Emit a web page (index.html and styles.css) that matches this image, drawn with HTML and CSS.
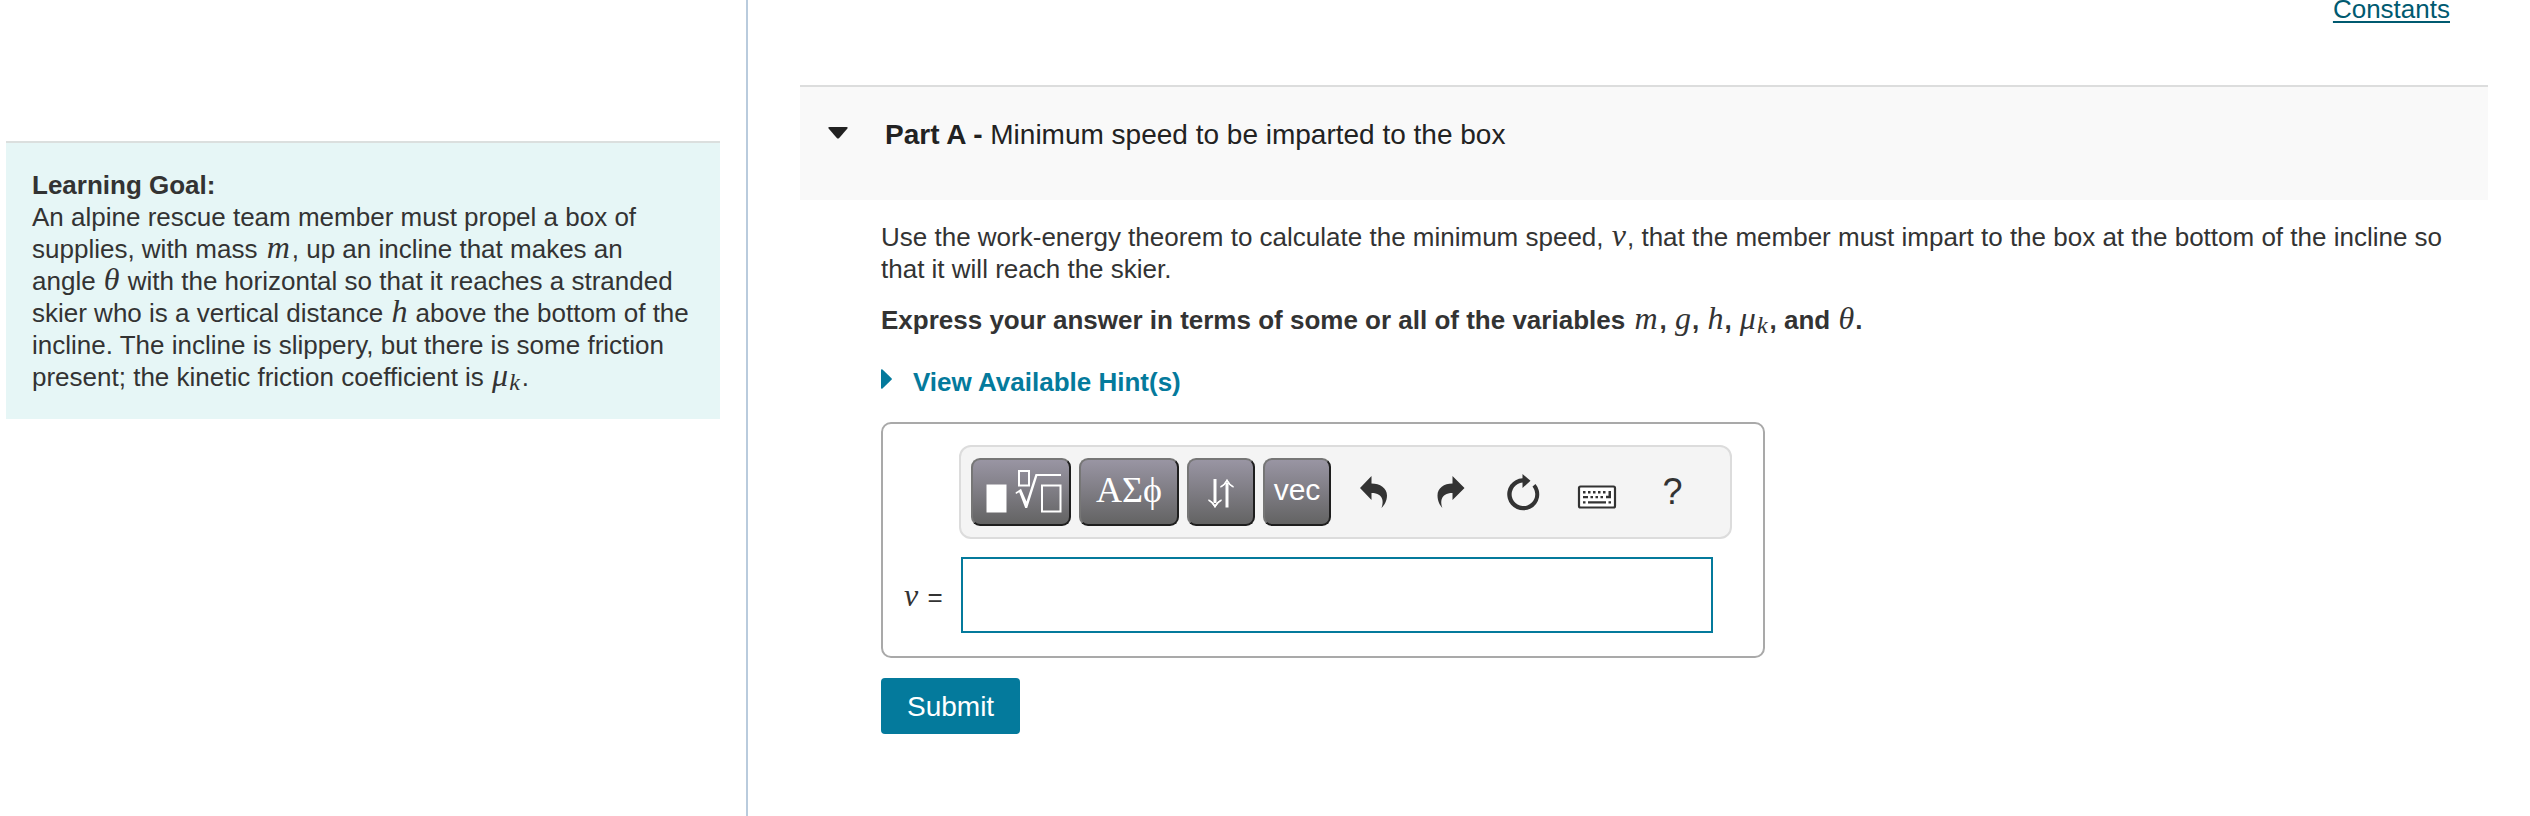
FILE: index.html
```html
<!DOCTYPE html>
<html lang="en">
<head>
<meta charset="utf-8">
<title>Part A - Minimum speed to be imparted to the box</title>
<link rel="stylesheet" href="styles.css">
</head>
<body>
<div class="page">
  <aside class="sidebar">
    <section class="goal">
      <strong>Learning Goal:</strong>
      <p>An alpine rescue team member must propel a box of supplies, with mass <i class="m wide">m</i>, up an incline that makes an angle <i class="m">θ</i> with the horizontal so that it reaches a stranded skier who is a vertical distance <i class="m">h</i> above the bottom of the incline. The incline is slippery, but there is some friction present; the kinetic friction coefficient is <i class="m">μ<sub>k</sub></i>.</p>
    </section>
  </aside>
  <main class="main">
    <nav class="links"><a href="#constants">Constants</a></nav>
    <header class="part">
      <svg class="caret" viewBox="0 0 20 12"><path d="M1.5 0H18.500Q20.500 0 19.200 1.800L11.200 11Q10 12.200 8.800 11L.8 1.800Q-.5 0 1.500 0Z"/></svg>
      <h1><b>Part A - </b>Minimum speed to be imparted to the box</h1>
    </header>
    <div class="body">
      <p>Use the work-energy theorem to calculate the minimum speed, <i class="m">v</i>, that the member must impart to the box at the bottom of the incline so that it will reach the skier.</p>
      <p class="instruct">Express your answer in terms of some or all of the variables <i class="m wide">m</i>, <i class="m">g</i>, <i class="m">h</i>, <i class="m">μ<sub>k</sub></i>, and <i class="m">θ</i>.</p>
      <a class="hints" href="#hints"><svg viewBox="0 0 11 20"><path d="M0 1.500Q0-.5 1.500.6L10.500 9.200Q11.300 10 10.500 10.800L1.500 19.500Q0 20.500 0 18.500Z"/></svg>View Available Hint(s)</a>
      <form class="answer" id="answer">
        <div class="toolbar">
          <button type="button" class="key big" aria-label="Templates"><svg viewBox="973 460 96 64"><path fill="#fff" d="M986.500 484.500h20v28h-20z"/><g fill="none" stroke="#fff" stroke-width="2"><path d="M1019 471h10v14.500h-10zM1042 485.500h18.500v26H1042z"/></g><path fill="#fff" d="M1015.500 492.500L1021 488.800L1026.500 501.500L1035.500 474H1061V476H1037.300L1027.200 508H1025.200L1019.200 492.300L1016 494Z"/></svg></button>
          <button type="button" class="key big greek">ΑΣϕ</button>
          <button type="button" class="key" aria-label="Arrows"><svg viewBox="1189 460 64 64"><g fill="#fff"><path d="M1213.500 479h3v24h-3z"/><path d="M1225.500 483h3v24.500h-3z"/><path d="M1208 499.500Q1213 501.500 1215 505Q1217 501.500 1222 499.500Q1217.500 503 1215 508Q1212.500 503 1208 499.500ZM1220 487.500Q1225 485.500 1227 482Q1229 485.500 1234 487.500Q1229.500 484 1227 479Q1224.500 484 1220 487.500Z"/></g><path fill="none" stroke="#fff" stroke-width="1.500" d="M1208.500 500q4 2 6.500 6.500q2.500-4.500 6.500-6.500M1220.500 487q4-2 6.500-6.500q2.500 4.500 6.500 6.500"/></svg></button>
          <button type="button" class="key vec">vec</button>
          <button type="button" class="tool" aria-label="Undo"><svg viewBox="1339 458 67 68"><path d="M1360 488L1371.500 476V483.500C1380 483.500 1387 488 1387 495.500C1387 501 1384 505.500 1381.500 508C1383.500 503 1384.300 493 1371.500 493V500Z"/></svg></button>
          <button type="button" class="tool" aria-label="Redo"><svg viewBox="1414 458 67 68"><path d="M1464.500 488L1452.500 476V483.500C1444 483.500 1437.500 488 1437.500 495.500C1437.500 501 1440 505.500 1442.500 508C1440.500 503 1439.700 493 1452.500 493V500Z"/></svg></button>
          <button type="button" class="tool" aria-label="Reset"><svg viewBox="1489 458 67 68"><path d="M1522.500 474L1530.500 480.800L1522.500 488V482.500A11.800 11.800 0 1 0 1534 489L1532.500 486.500L1535.500 484A16 16 0 1 1 1522.500 478.300Z"/></svg></button>
          <button type="button" class="tool" aria-label="Keyboard"><svg viewBox="1564 458 67 68"><rect x="1579" y="486.500" width="36" height="21" rx="1.500" fill="#fff" stroke="#333" stroke-width="2.200"/><path d="M1583 491h2.500v2.500h-2.500zM1588 491h2.500v2.500h-2.500zM1593 491h2.500v2.500h-2.500zM1598 491h2.500v2.500h-2.500zM1603 491h2.500v2.500h-2.500zM1608.500 491h2.500v7.200h-5v-2.400h2.500zM1583 496h5v2.200h-5zM1590.500 496h2.500v2.200h-2.500zM1595.500 496h2.500v2.200h-2.500zM1600.500 496h2.500v2.200h-2.500zM1583 501.200h2.500v2.200h-2.500zM1588 501.200h18v2.200h-18zM1608.500 501.200h2.500v2.200h-2.500z"/></svg></button>
          <button type="button" class="tool">?</button>
        </div>
        <label for="speed"><i class="m wide">v</i> =</label>
        <input id="speed" type="text">
      </form>
      <button type="submit" form="answer" class="submit">Submit</button>
    </div>
  </main>
</div>
</body>
</html>
```

FILE: styles.css
```css
* { box-sizing: border-box; }
body {
  margin: 0;
  background: #fff;
  color: #333;
  font: 26px/32px "Liberation Sans", Arial, sans-serif;
}
p, h1 { margin: 0; }
button, input { font-family: inherit; margin: 0; }
svg { display: block; flex: none; }

.page {
  display: grid;
  grid-template-columns: 748px minmax(0, 1fr);
  min-height: 100vh;
}
.sidebar {
  padding: 141px 26px 0 6px;
  border-right: 2px solid #b9cbdd;
}
.goal {
  padding: 26px 29px 26px 26px;
  border-top: 2px solid #dbdfde;
  background: #e6f6f6;
}

/* Mathematical variables */
.m {
  font: italic 32px/28px "Liberation Serif", "Times New Roman", serif;
  padding: 0 1px;
}
.m.wide { padding: 0 2px; }
.m sub {
  font-size: 24px;
  line-height: 16px;
  vertical-align: -4px;
  padding: 0 1px;
}

.main { padding: 0 42px 0 52px; }
.links {
  padding-right: 38px;
  text-align: right;
  line-height: 18px;
}
.links a {
  color: #005a70;
  text-decoration-thickness: 2px;
  text-underline-offset: 3px;
}
.part {
  display: flex;
  align-items: flex-start;
  gap: 37px;
  margin-top: 67px;
  padding: 32px 28px 49px;
  border-top: 2px solid #dcdddd;
  background: #f9f9f9;
  color: #222;
}
.part h1 { font-size: 28px; font-weight: 400; }
.caret { width: 20px; height: 12px; margin-top: 8px; fill: #222; }

.body { padding: 21px 32px 0 81px; }
.instruct { margin-top: 19px; font-weight: 700; }
.hints {
  display: flex;
  width: fit-content;
  gap: 21px;
  margin-top: 30px;
  color: #047a9c;
  font-weight: 700;
  text-decoration: none;
}
.hints svg { width: 11px; height: 20px; margin-top: 3px; fill: #047a9c; }

.answer {
  display: grid;
  grid-template-columns: 57px minmax(0, 1fr);
  row-gap: 18px;
  align-items: center;
  max-width: 884px;
  margin-top: 24px;
  padding: 21px 31px 23px 19px;
  border: 2px solid #a9a9a9;
  border-radius: 10px;
}
.toolbar {
  grid-column: 2;
  display: flex;
  gap: 8px;
  padding: 11px 10px;
  border: 2px solid #dcdcdc;
  border-radius: 12px;
  background: #f4f4f4;
}
.key, .tool {
  display: flex;
  align-items: center;
  justify-content: center;
  height: 68px;
  padding: 0;
}
.key {
  width: 68px;
  border: 2px solid;
  border-color: #767676 #1e1e1e #1e1e1e #767676;
  border-radius: 9px;
  background: linear-gradient(#9995a3, #636363);
  color: #fff;
}
.key svg { width: 64px; height: 64px; }
.key.big { width: 100px; }
.key.big svg { width: 96px; }
.greek { font: 36px/40px "Liberation Serif", serif; padding-bottom: 4px; }
.vec { font-size: 30px; padding-bottom: 4px; }
.tool {
  width: 67px;
  border: 0;
  background: none;
  color: #333;
  font-size: 36px;
}
.tool svg { width: 67px; height: 68px; fill: #333; }

.answer label { padding-top: 3px; white-space: nowrap; }
.answer input {
  height: 76px;
  margin: 0 19px 0 2px;
  padding: 0 12px;
  border: 2px solid #047a9c;
  background: #fff;
  font-size: 28px;
  min-width: 0;
}
.submit {
  height: 56px;
  margin-top: 20px;
  padding: 2px 26px 0;
  border: 0;
  border-radius: 4px;
  background: #047a9c;
  color: #fff;
  font-size: 28px;
}
```
